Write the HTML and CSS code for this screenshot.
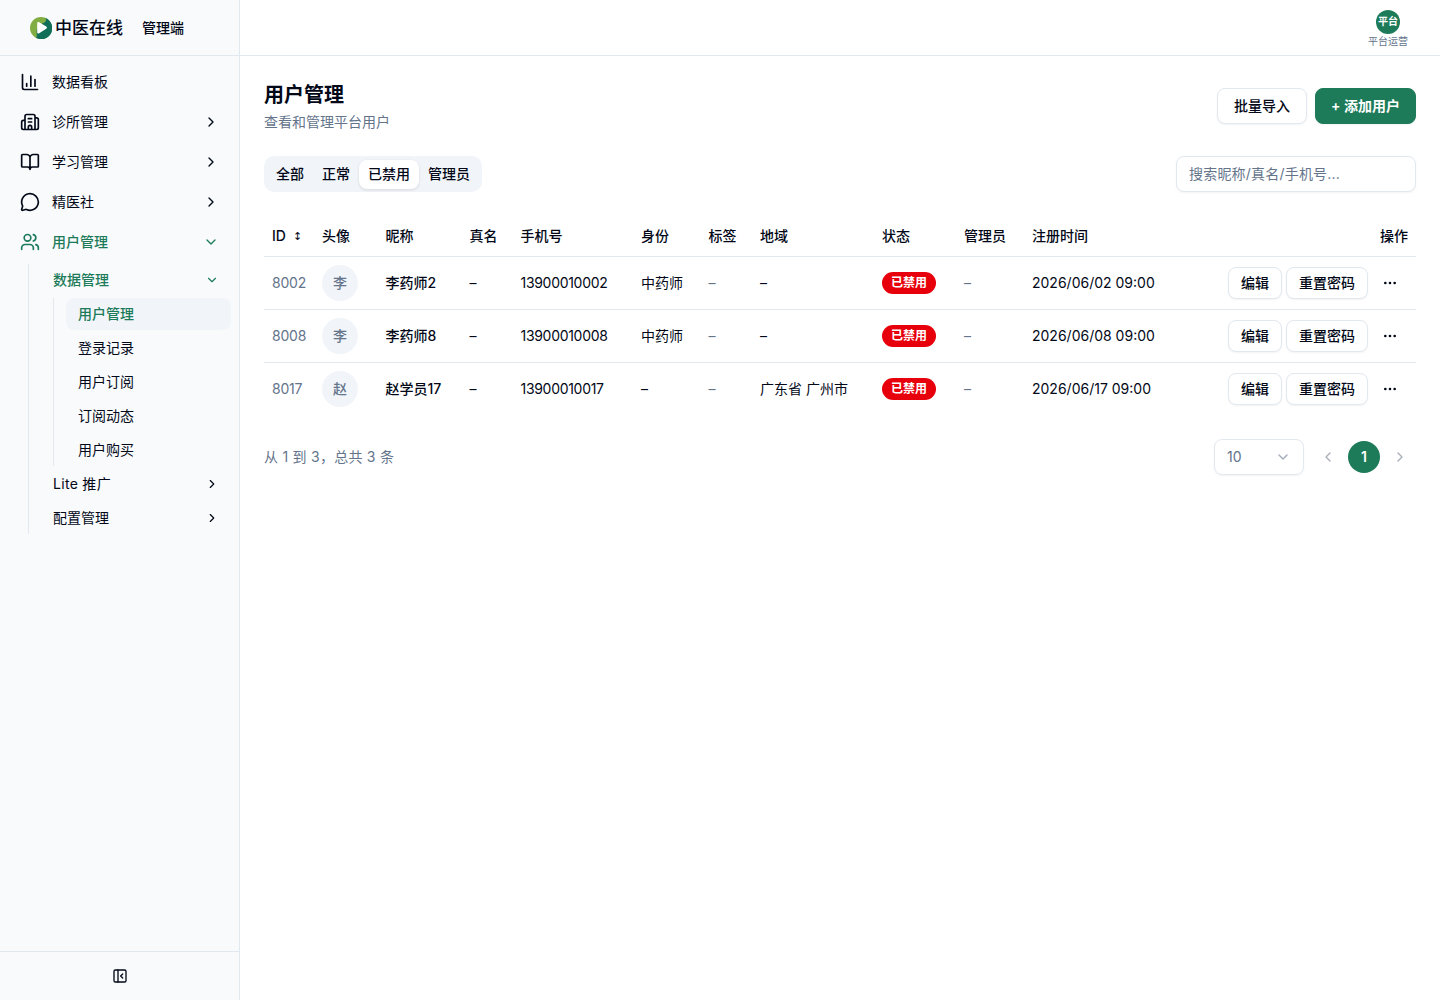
FILE: index.html
```html
<!DOCTYPE html>
<html lang="zh-CN">
<head>
<meta charset="utf-8">
<title>用户管理</title>
<link rel="stylesheet" href="styles.css">
</head>
<body>
<svg class="sprite" aria-hidden="true">
  <symbol id="right" viewBox="0 0 24 24"><path d="m9 18 6-6-6-6"/></symbol>
  <symbol id="left" viewBox="0 0 24 24"><path d="m15 18-6-6 6-6"/></symbol>
  <symbol id="down" viewBox="0 0 24 24"><path d="m6 9 6 6 6-6"/></symbol>
  <symbol id="dots" viewBox="0 0 24 24"><circle cx="12" cy="12" r="1"/><circle cx="19" cy="12" r="1"/><circle cx="5" cy="12" r="1"/></symbol>
</svg>
<div class="app">
  <aside class="sidebar">
    <div class="brand">
      <svg class="logo" viewBox="0 0 22 22"><circle cx="11" cy="11" r="11" fill="#82ad43"/><path d="M15.500 1A11 11 0 1 1 6 20.800C7.500 19 6.400 16 6.700 13L12 6.500C15 6 17 4 15.500 1Z" fill="#116e58"/><path d="M7.200 6.300c0-1.200 1-1.700 2-1.100l7 4.300c1 .6 1 1.600 0 2.200l-7 4.500c-1 .6-2 .1-2-1Z" fill="#fff"/></svg>
      <span class="brand-name">中医在线</span>
      <span class="brand-role">管理端</span>
    </div>
    <nav class="nav">
      <a class="item"><svg class="i20"><use href="#chart"/></svg><span>数据看板</span></a>
      <a class="item"><svg class="i20"><use href="#building"/></svg><span>诊所管理</span><svg class="i16"><use href="#right"/></svg></a>
      <a class="item"><svg class="i20"><use href="#book"/></svg><span>学习管理</span><svg class="i16"><use href="#right"/></svg></a>
      <a class="item"><svg class="i20"><use href="#chat"/></svg><span>精医社</span><svg class="i16"><use href="#right"/></svg></a>
      <div class="group">
        <a class="item current"><svg class="i20"><use href="#users"/></svg><span>用户管理</span><svg class="i16"><use href="#down"/></svg></a>
        <div class="sub">
          <a class="subitem current"><span>数据管理</span><svg class="i14"><use href="#down"/></svg></a>
          <div class="leafs">
            <a class="leaf current active">用户管理</a>
            <a class="leaf">登录记录</a>
            <a class="leaf">用户订阅</a>
            <a class="leaf">订阅动态</a>
            <a class="leaf">用户购买</a>
          </div>
          <a class="subitem latin"><span>Lite 推广</span><svg class="i14"><use href="#right"/></svg></a>
          <a class="subitem"><span>配置管理</span><svg class="i14"><use href="#right"/></svg></a>
        </div>
      </div>
    </nav>
    <div class="collapse"><svg class="i16" viewBox="0 0 24 24"><rect width="18" height="18" x="3" y="3" rx="2"/><path d="M9 3v18M16 15l-3-3 3-3"/></svg></div>
  </aside>
  <div class="content">
    <header class="topbar">
      <div class="account"><span class="account-badge">平台</span><span class="account-name">平台运营</span></div>
    </header>
    <main class="main">
      <div class="bar">
        <div>
          <h1>用户管理</h1>
          <p class="desc">查看和管理平台用户</p>
        </div>
        <div class="actions"><button class="btn">批量导入</button><button class="btn primary">+ 添加用户</button></div>
      </div>
      <div class="bar">
        <div class="tabs"><span>全部</span><span>正常</span><span class="selected">已禁用</span><span>管理员</span></div>
        <input class="search" placeholder="搜索昵称/真名/手机号...">
      </div>
      <table>
        <colgroup><col class="c-id"><col class="c-avatar"><col class="c-nick"><col class="c-real"><col class="c-phone"><col class="c-role"><col class="c-tag"><col class="c-region"><col class="c-status"><col class="c-admin"><col class="c-time"><col></colgroup>
        <thead><tr><th>ID<span class="sort">↕</span></th><th>头像</th><th>昵称</th><th>真名</th><th>手机号</th><th>身份</th><th>标签</th><th>地域</th><th>状态</th><th>管理员</th><th>注册时间</th><th class="ops-head">操作</th></tr></thead>
        <tbody>
          <tr><td class="muted id">8002</td><td><span class="avatar">李</span></td><td class="strong">李药师2</td><td>–</td><td class="phone">13900010002</td><td>中药师</td><td class="muted">–</td><td>–</td><td><span class="pill">已禁用</span></td><td class="muted">–</td><td>2026/06/02 09:00</td><td><div class="ops"><button class="btn small">编辑</button><button class="btn small">重置密码</button><svg class="i16 more"><use href="#dots"/></svg></div></td></tr>
          <tr><td class="muted id">8008</td><td><span class="avatar">李</span></td><td class="strong">李药师8</td><td>–</td><td class="phone">13900010008</td><td>中药师</td><td class="muted">–</td><td>–</td><td><span class="pill">已禁用</span></td><td class="muted">–</td><td>2026/06/08 09:00</td><td><div class="ops"><button class="btn small">编辑</button><button class="btn small">重置密码</button><svg class="i16 more"><use href="#dots"/></svg></div></td></tr>
          <tr><td class="muted id">8017</td><td><span class="avatar">赵</span></td><td class="strong">赵学员17</td><td>–</td><td class="phone">13900010017</td><td>–</td><td class="muted">–</td><td>广东省 广州市</td><td><span class="pill">已禁用</span></td><td class="muted">–</td><td>2026/06/17 09:00</td><td><div class="ops"><button class="btn small">编辑</button><button class="btn small">重置密码</button><svg class="i16 more"><use href="#dots"/></svg></div></td></tr>
        </tbody>
      </table>
      <div class="bar">
        <span class="total">从 1 到 3，总共 3 条</span>
        <div class="pager">
          <div class="size"><span>10</span><svg class="i16"><use href="#down"/></svg></div>
          <span class="page"><svg class="i16"><use href="#left"/></svg></span>
          <span class="page on">1</span>
          <span class="page"><svg class="i16"><use href="#right"/></svg></span>
        </div>
      </div>
    </main>
  </div>
</div>
<svg class="sprite" aria-hidden="true">
  <symbol id="chart" viewBox="0 0 24 24"><path d="M3 3v16a2 2 0 0 0 2 2h16M18 17V9M13 17V5M8 17v-3"/></symbol>
  <symbol id="building" viewBox="0 0 24 24"><path d="M10 12h4M10 8h4M14 21v-3a2 2 0 0 0-4 0v3M6 10H4a2 2 0 0 0-2 2v7a2 2 0 0 0 2 2h16a2 2 0 0 0 2-2V9a2 2 0 0 0-2-2h-2M6 21V5a2 2 0 0 1 2-2h8a2 2 0 0 1 2 2v16"/></symbol>
  <symbol id="book" viewBox="0 0 24 24"><path d="M12 7v14M3 18a1 1 0 0 1-1-1V4a1 1 0 0 1 1-1h5a4 4 0 0 1 4 4 4 4 0 0 1 4-4h5a1 1 0 0 1 1 1v13a1 1 0 0 1-1 1h-6a3 3 0 0 0-3 3 3 3 0 0 0-3-3z"/></symbol>
  <symbol id="chat" viewBox="0 0 24 24"><path d="M2.992 16.342a2 2 0 0 1 .094 1.167l-1.065 3.290a1 1 0 0 0 1.236 1.168l3.413-.998a2 2 0 0 1 1.099.092 10 10 0 1 0-4.777-4.719"/></symbol>
  <symbol id="users" viewBox="0 0 24 24"><path d="M16 21v-2a4 4 0 0 0-4-4H6a4 4 0 0 0-4 4v2M16 3.128a4 4 0 0 1 0 7.744M22 21v-2a4 4 0 0 0-3-3.870"/><circle cx="9" cy="7" r="4"/></symbol>
</svg>
</body>
</html>
```
FILE: styles.css
```css
* { box-sizing: border-box; }
body {
  margin: 0;
  font: 14px/20px Inter, "Noto Sans CJK SC", sans-serif;
  color: #020817;
  background: #fff;
}
svg { fill: none; stroke: currentColor; stroke-width: 2; stroke-linecap: round; stroke-linejoin: round; flex: none; }
.sprite { display: none; }
.i20 { width: 20px; height: 20px; }
.i16 { width: 16px; height: 16px; }
.i14 { width: 14px; height: 14px; }
.app { display: flex; height: 1000px; }

.sidebar { width: 240px; flex: none; display: flex; flex-direction: column; background: #f8fafc; border-right: 1px solid #e2e8f0; }
.brand { height: 56px; display: flex; align-items: center; padding-left: 30px; border-bottom: 1px solid #e2e8f0; }
.logo { width: 22px; height: 22px; stroke: none; }
.brand-name { font-size: 17px; font-weight: 500; margin-left: 3px; }
.brand-role { font-weight: 500; margin-left: 19px; }
.nav { flex: 1; padding: 8px; display: flex; flex-direction: column; gap: 4px; }
.item { height: 36px; padding: 0 12px; display: flex; align-items: center; gap: 12px; }
.item span, .subitem span { flex: 1; }
.current { color: #1e7b5a; font-weight: 500; }
.sub { margin: 4px 0 0 20px; padding-left: 12px; border-left: 1px solid #e2e8f0; display: flex; flex-direction: column; gap: 2px; }
.subitem { height: 32px; padding: 0 12px; display: flex; align-items: center; }
.latin { letter-spacing: .3px; }
.leafs { margin-left: 12px; padding-left: 12px; border-left: 1px solid #e2e8f0; display: flex; flex-direction: column; gap: 2px; }
.leaf { height: 32px; padding: 6px 12px; border-radius: 8px; }
.active { background: #f1f5f9; }
.collapse { height: 49px; border-top: 1px solid #e2e8f0; display: flex; align-items: center; justify-content: center; }

.content { flex: 1; min-width: 0; }
.topbar { height: 56px; border-bottom: 1px solid #e2e8f0; padding: 2px 32px 0; display: flex; justify-content: flex-end; align-items: center; }
.account { display: flex; flex-direction: column; align-items: center; gap: 1px; }
.account-badge { width: 24px; height: 24px; border-radius: 50%; background: #1e7b5a; color: #fff; font-size: 10px; line-height: 23px; font-weight: 600; text-align: center; }
.account-name { font-size: 10px; line-height: 12px; color: #64748b; }

.main { padding: 24px; display: flex; flex-direction: column; gap: 24px; }
.bar { display: flex; justify-content: space-between; align-items: center; }
h1 { margin: 0; padding-top: 2px; font-size: 20px; line-height: 26px; font-weight: 600; }
.desc { margin: 4px 0 0; color: #64748b; }
.actions { display: flex; gap: 8px; }
.btn { height: 36px; padding: 0 16px; font: inherit; font-weight: 500; color: inherit; background: #fff; border: 1px solid #e2e8f0; border-radius: 8px; box-shadow: 0 1px 2px rgb(0 0 0 / 5%); white-space: nowrap; }
.primary { width: 101px; padding: 0; font-weight: 600; background: #1e7b5a; border-color: #1e7b5a; color: #fff; }
.small { height: 32px; padding: 0 12px; }
.tabs { height: 36px; padding: 3px; background: #f1f5f9; border-radius: 10px; display: flex; font-weight: 500; }
.tabs span { padding: 5px 9px; border-radius: 8px; }
.tabs .selected { background: #fff; box-shadow: 0 1px 3px rgb(0 0 0 / 12%); height: 29px; margin-top: 1px; padding-top: 4px; }
.search { width: 240px; height: 36px; padding: 0 12px 2px; font: inherit; letter-spacing: .2px; border: 1px solid #e2e8f0; border-radius: 8px; box-shadow: 0 1px 2px rgb(0 0 0 / 5%); }
.search::placeholder { color: #64748b; opacity: 1; }

table { width: 1152px; table-layout: fixed; border-collapse: separate; border-spacing: 0; }
th { height: 41px; padding: 0 8px; text-align: left; font-weight: 500; white-space: nowrap; border-bottom: 1px solid #e2e8f0; }
td { height: 53px; padding: 0 8px; white-space: nowrap; border-bottom: 1px solid #e2e8f0; }
tbody tr:last-child td { height: 52px; border-bottom: 0; }
.c-id { width: 50px; } .c-avatar { width: 63.500px; } .c-nick { width: 84px; } .c-real { width: 51px; }
.c-phone { width: 120.500px; } .c-role { width: 67.500px; } .c-tag { width: 51.500px; } .c-region { width: 122px; }
.c-status { width: 82px; } .c-admin { width: 68px; } .c-time { width: 142px; }
.sort { font-family: "DejaVu Sans", sans-serif; font-size: 11px; line-height: 12px; margin-left: 7px; vertical-align: 1px; }
.muted { color: #64748b; }
.id { letter-spacing: -.2px; }
.phone { letter-spacing: -.3px; }
.strong { font-weight: 500; }
.avatar { display: block; width: 36px; height: 36px; border-radius: 50%; background: #f1f5f9; color: #64748b; line-height: 36px; text-align: center; font-weight: 500; }
.pill { display: block; width: 54px; height: 22px; border-radius: 11px; background: #e7000b; color: #fff; font-size: 12px; line-height: 22px; font-weight: 600; text-align: center; }
th.ops-head { text-align: right; }
.ops { display: flex; justify-content: flex-end; align-items: center; gap: 4px; }
.more { margin: 0 10px 0 10px; }

.total { color: #64748b; letter-spacing: .25px; }
.pager { display: flex; align-items: center; gap: 4px; }
.size { width: 90px; height: 36px; margin-right: 4px; padding: 0 12px; display: flex; align-items: center; justify-content: space-between; color: #64748b; border: 1px solid #e2e8f0; border-radius: 8px; box-shadow: 0 1px 2px rgb(0 0 0 / 5%); }
.size svg { opacity: .6; }
.page { width: 32px; height: 32px; display: flex; align-items: center; justify-content: center; color: #a9aeb6; border-radius: 50%; }
.on { background: #1e7b5a; color: #fff; font-weight: 600; }
```
